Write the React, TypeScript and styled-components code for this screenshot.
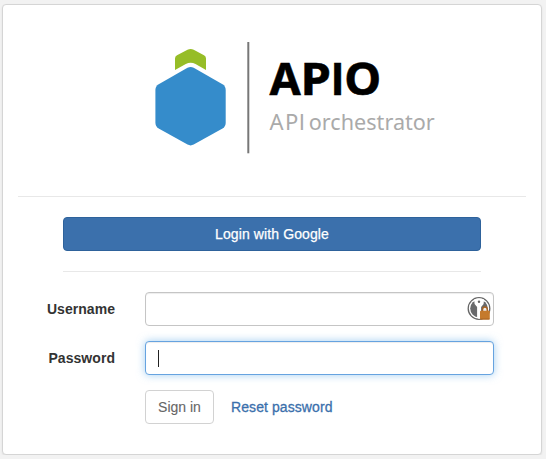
import React from "react";
import styled, { createGlobalStyle, css } from "styled-components";

const GlobalStyle = createGlobalStyle`
  *, *::before, *::after { box-sizing: border-box; }
  body {
    margin: 0;
    background: #f2f2f2;
    color: #333;
    font: 14px/20px "Liberation Sans", Arial, sans-serif;
    overflow: hidden;
  }
`;

const Panel = styled.main`
  width: 540px;
  height: 451px;
  margin: 4px 0 0 2px;
  padding: 0 15px;
  background: #fff;
  border: 1px solid #d5d5d5;
  border-radius: 4px;
  box-shadow: 0 1px 2px rgba(0, 0, 0, 0.08);
`;

const Logo = styled.svg`
  display: block;
  width: 300px;
  height: 130px;
  margin: 25px 0 36px 132px;
  font-family: "Noto Sans", sans-serif;
`;

const Rule = styled.hr`
  height: 1px;
  margin: 0;
  border: 0;
  background: #e8e8e8;
`;

const GoogleSection = styled.section`
  display: flex;
  flex-direction: column;
  gap: 20px;
  width: 418px;
  margin: 20px 0 20px 45px;
`;

const control = css`
  height: 34px;
  border-radius: 4px;
  font: inherit;
`;

const Button = styled.button<{ $primary?: boolean }>`
  ${control}
  padding: 0 12px;
  border: 1px solid ${(p) => (p.$primary ? "#2e629b" : "#d2d2d2")};
  background: ${(p) => (p.$primary ? "#3b70ac" : "#fff")};
  color: ${(p) => (p.$primary ? "#fff" : "#666")};
  letter-spacing: ${(p) => (p.$primary ? "0.11px" : "0")};
  -webkit-text-stroke: ${(p) => (p.$primary ? "0.25px" : "0.1px")};
  ${(p) => !p.$primary && "width: 69px; padding: 0;"}
`;

const Form = styled.form`
  display: flex;
  flex-direction: column;
  gap: 15px;
`;

const Row = styled.div`
  display: grid;
  grid-template-columns: 97px 349px;
  column-gap: 30px;
  align-items: center;
`;

const Label = styled.label`
  font-weight: 700;
  text-align: right;
  letter-spacing: 0.05px;
`;

const Field = styled.div<{ $focused?: boolean }>`
  ${control}
  display: flex;
  align-items: center;
  padding: 0 2px 0 12px;
  border: 1px solid ${(p) => (p.$focused ? "#66a3e0" : "#c5c5c5")};
  background: #fff;
  box-shadow: inset 0 1px 1px rgba(0, 0, 0, 0.075)
    ${(p) => p.$focused && ", 0 0 8px rgba(102, 175, 233, 0.6)"};
`;

const Input = styled.input`
  flex: 1;
  min-width: 0;
  padding: 0;
  border: 0;
  outline: 0;
  background: transparent;
  font: inherit;
`;

const Caret = styled.span`
  width: 1px;
  height: 17px;
  background: #222;
`;

const KeyIcon = styled.svg`
  width: 24px;
  height: 24px;
  flex: none;
`;

const Actions = styled.div`
  display: flex;
  align-items: center;
  gap: 17px;
  padding-left: 127px;
`;

const Link = styled.a`
  color: #3b70ac;
  text-decoration: none;
  letter-spacing: 0.08px;
  -webkit-text-stroke: 0.3px;
`;

function ApioLogo() {
  return (
    <Logo viewBox="150 30 300 130" role="img" aria-label="APIO API orchestrator">
      <path
        fill="#96bd27"
        d="M175 70V58.5Q175 56.3 177 55.2L187.5 49.8Q190.6 48.4 193.7 49.8L204 55.2Q206 56.3 206 58.5V70L195.5 64Q190.6 61.6 185.8 64Z"
      />
      <path
        fill="#358ccb"
        d="M187.5 67.8Q190.6 66.2 193.7 67.8L222.5 84.2Q225.7 86.2 225.7 90V122.8Q225.7 126.6 222.5 128.6L193.7 144.6Q190.6 146.2 187.5 144.6L158.7 128.6Q155.4 126.6 155.4 122.8V90Q155.4 86.2 158.7 84.2Z"
      />
      <path stroke="#777" strokeWidth="2" d="M248.3 42V153.3" />
      <g fill="#000" stroke="#000" strokeWidth="0.5" fontSize="44" fontWeight="700">
        <text x="269.6" y="95" textLength="31.3" lengthAdjust="spacingAndGlyphs">A</text>
        <text x="300.6" y="95" textLength="30.5" lengthAdjust="spacingAndGlyphs">P</text>
        <text x="331.4" y="95" fontFamily="Inter, sans-serif" fontSize="43.2">I</text>
        <text x="344.3" y="95" textLength="37" lengthAdjust="spacingAndGlyphs">O</text>
      </g>
      <g fill="#aaa" fontSize="22">
        <text y="129.7">
          <tspan x="269.5">A</tspan>
          <tspan x="285">P</tspan>
          <tspan x="299" fontFamily="Inter, sans-serif" fontSize="21.6">I</tspan>
        </text>
        <text x="308.8" y="129.7" textLength="126" lengthAdjust="spacingAndGlyphs">
          orchestrator
        </text>
      </g>
    </Logo>
  );
}

function PasswordManagerIcon() {
  return (
    <KeyIcon viewBox="0 0 24 24" aria-hidden="true">
      <circle cx="12" cy="11.5" r="10.8" fill="#fff" stroke="#666" strokeWidth="1.3" />
      <circle cx="12" cy="11.5" r="8.8" fill="#68696b" />
      <path fill="#fff" d="M7.2 2.4 7.6 7l2.5 3v10.3l2 1.8 2-1.8V10l2.5-3 .4-4.6-2.8-1-4.1.1Z" />
      <circle cx="12" cy="4.7" r="1.2" fill="#666" />
      <path fill="#eee" stroke="#a86221" strokeWidth="1.5" d="M15.5 14.5v-1.8q0-2.6 2.4-2.6t2.4 2.6v1.8" />
      <rect x="13" y="13.7" width="9.8" height="8.8" rx="0.8" fill="#c57a2c" />
      <path stroke="#a86221" d="M13.5 22h9" />
    </KeyIcon>
  );
}

export default function App() {
  return (
    <>
      <GlobalStyle />
      <Panel>
        <ApioLogo />
        <Rule />
        <GoogleSection>
          <Button $primary type="button">Login with Google</Button>
          <Rule />
        </GoogleSection>
        <Form>
          <Row>
            <Label htmlFor="username">Username</Label>
            <Field>
              <Input id="username" />
              <PasswordManagerIcon />
            </Field>
          </Row>
          <Row>
            <Label htmlFor="password">Password</Label>
            <Field $focused>
              <Caret />
              <Input id="password" type="password" />
            </Field>
          </Row>
          <Actions>
            <Button type="button">Sign in</Button>
            <Link href="#">Reset password</Link>
          </Actions>
        </Form>
      </Panel>
    </>
  );
}
